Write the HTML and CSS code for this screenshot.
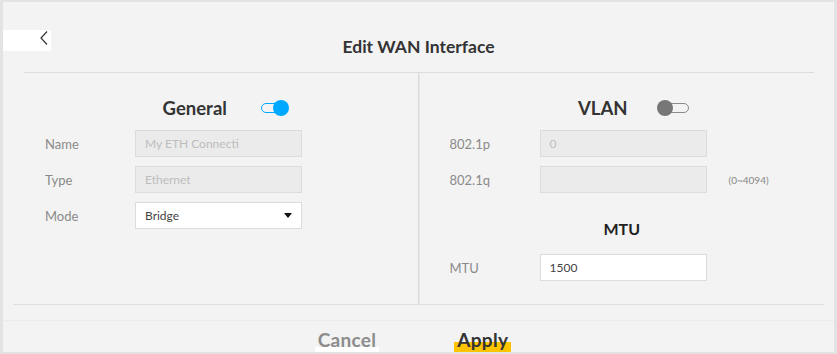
FILE: index.html
```html
<!DOCTYPE html>
<html>
<head lang="en">
    <meta charset="UTF-8">
    <title>Edit WAN Interface</title>
    <link rel="stylesheet" href="styles.css">
</head>
<body>
<div class="panel">
    <div class="top">
        <div class="back">
            <svg width="48" height="21" viewBox="0 0 48 21"><path d="M44 1.5 L38 8 L44 14.5" fill="none" stroke="#333" stroke-width="1.2"/></svg>
        </div>
        <div class="title">Edit WAN Interface</div>
        <div></div>
    </div>
    <div class="rule"></div>
    <div class="cols">
        <section class="col col-left">
            <div class="col-title">
                <strong>General</strong>
                <span class="toggle toggle-on"></span>
            </div>
            <div class="form">
                <label>Name</label>
                <div class="field field-off">My ETH Connecti</div>
                <span></span>
                <label>Type</label>
                <div class="field field-off">Ethernet</div>
                <span></span>
                <label>Mode</label>
                <div class="field field-select">Bridge
                    <svg width="8" height="5" viewBox="0 0 8 5"><path d="M0 0 H8 L4 5 Z" fill="#111"/></svg>
                </div>
                <span></span>
            </div>
        </section>
        <section class="col col-right">
            <div class="col-title col-title-vlan">
                <strong>VLAN</strong>
                <span class="toggle toggle-off"></span>
            </div>
            <div class="form">
                <label>802.1p</label>
                <div class="field field-off">0</div>
                <span></span>
                <label>802.1q</label>
                <div class="field field-off"></div>
                <span class="hint">(0~4094)</span>
            </div>
            <div class="sub-title"><strong>MTU</strong></div>
            <div class="form">
                <label>MTU</label>
                <div class="field">1500</div>
                <span></span>
            </div>
        </section>
    </div>
    <div class="foot">
        <div class="buttons">
            <button class="btn btn-cancel">Cancel</button>
            <button class="btn btn-apply">Apply</button>
        </div>
    </div>
</div>
</body>
</html>
```

FILE: styles.css
```css
html, body {
    margin: 0;
    background: #e3e3e3;
    font-family: "Lato", "Liberation Sans", sans-serif;
}
.panel {
    margin: 2px 3px;
    height: 350px;
    background: #f3f3f3;
    overflow: hidden;
    display: flex;
    flex-direction: column;
}
.top {
    flex-shrink: 0;
    height: 70px;
    box-sizing: border-box;
    padding-top: 28px;
    display: grid;
    grid-template-columns: 1fr auto 1fr;
    align-items: start;
}
.back {
    width: 48px;
    height: 21px;
    background: #fff;
}
.back svg {
    display: block;
}
.title {
    margin-top: 7px;
    font-size: 17.5px;
    line-height: 20px;
    font-weight: bold;
    color: #333;
}
.rule {
    flex-shrink: 0;
    height: 1px;
    margin: 0 20px 0 21px;
    background: #dcdcdc;
}
.cols {
    flex-shrink: 0;
    margin: 0 10px;
    height: 231px;
    display: grid;
    grid-template-columns: 1fr 1fr;
    border-bottom: 1px solid #dedede;
}
.col-left {
    border-right: 1px solid #dcdcdc;
    padding-left: 32px;
}
.col-right {
    border-left: 1px solid #e8e8e8;
    padding-left: 30px;
}
.col-title {
    margin: 24px 0 0 -32px;
    height: 22px;
    display: flex;
    align-items: center;
    justify-content: center;
    gap: 34px;
    padding-left: 19px;
    font-size: 18.5px;
    color: #333;
}
.col-title-vlan {
    margin-left: -30px;
    gap: 30px;
    padding-left: 23px;
}
.toggle {
    position: relative;
    display: inline-block;
    width: 26px;
    height: 10px;
    border: 1.5px solid #00a9ff;
    border-radius: 6px;
    box-sizing: border-box;
}
.toggle::after {
    content: "";
    position: absolute;
    top: -4.5px;
    width: 16px;
    height: 16px;
    border-radius: 50%;
}
.toggle-on::after {
    right: -3px;
    background: #00a9ff;
}
.toggle-off {
    width: 31px;
    border-color: #8a8a8a;
}
.toggle-off::after {
    left: -2px;
    background: #777;
}
.form {
    margin-top: 11px;
    display: grid;
    grid-template-columns: 90px 167px auto;
    row-gap: 9px;
    align-items: center;
}
.form label {
    font-size: 13px;
    color: #8a8a8a;
}
.field {
    height: 27px;
    box-sizing: border-box;
    border: 1px solid #dcdcdc;
    background: #fff;
    padding: 0 9px;
    font-size: 12px;
    line-height: 25px;
    color: #444;
}
.field-off {
    background: #ebebeb;
    color: #bdbdbd;
}
.field-select {
    display: flex;
    align-items: center;
    justify-content: space-between;
}
.hint {
    padding-left: 22px;
    font-size: 10px;
    color: #888;
}
.sub-title {
    margin-top: 26px;
    text-align: center;
    font-size: 16px;
    color: #222;
    padding-right: 30px;
}
.sub-title + .form {
    margin-top: 16px;
}
.foot {
    flex: 1;
    padding-top: 15px;
}
.buttons {
    border-top: 1px solid #ececec;
    padding-top: 6px;
    padding-right: 11px;
    display: flex;
    justify-content: center;
    gap: 75px;
}
.btn {
    height: 30px;
    margin: 0;
    border: none;
    padding: 0 3px 4px;
    font-family: inherit;
    font-size: 19px;
    font-weight: bold;
    line-height: 22px;
    letter-spacing: 0.3px;
}
.btn-cancel {
    color: #8c8c8c;
    background: linear-gradient(transparent 20px, #fff 20px);
}
.btn-apply {
    color: #333;
    background: linear-gradient(transparent 15px, #ffc400 15px);
}
```
